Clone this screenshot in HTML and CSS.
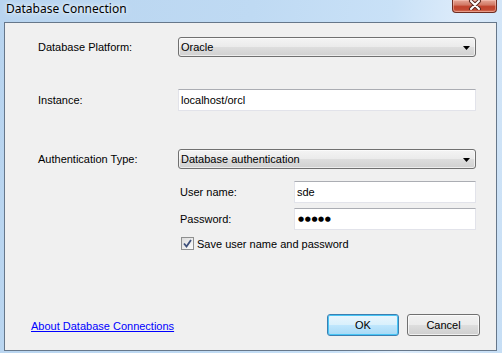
FILE: index.html
```html
<!DOCTYPE html>
<html>
<head>
<meta charset="utf-8">
<link rel="stylesheet" href="styles.css">
</head>
<body>
<div class="window">
  <div class="titlebar">
    <span class="title">Database Connection</span>
    <div class="close">
      <svg width="18" height="10" viewBox="0 0 18 10">
        <path d="M5 1 L13 9 M13 1 L5 9" stroke="#5a2a22" stroke-width="4" stroke-linecap="round"/>
        <path d="M5 1 L13 9 M13 1 L5 9" stroke="#ffffff" stroke-width="2" stroke-linecap="round"/>
      </svg>
    </div>
  </div>
  <div class="panel">
    <div class="row row-platform">
      <div class="label">Database Platform:</div>
      <div class="combo"><span>Oracle</span><svg class="arrow" width="7" height="4" viewBox="0 0 7 4"><path d="M0 0 H7 L3.5 4 Z" fill="#000"/></svg></div>
    </div>
    <div class="row row-instance">
      <div class="label">Instance:</div>
      <div class="field">localhost/orcl</div>
    </div>
    <div class="row row-auth">
      <div class="label">Authentication Type:</div>
      <div class="combo"><span>Database authentication</span><svg class="arrow" width="7" height="4" viewBox="0 0 7 4"><path d="M0 0 H7 L3.5 4 Z" fill="#000"/></svg></div>
    </div>
    <div class="sub">
      <div class="subrow">
        <div class="sublabel">User name:</div>
        <div class="field small">sde</div>
      </div>
      <div class="subrow pw">
        <div class="sublabel">Password:</div>
        <div class="field small dots">●●●●●</div>
      </div>
      <div class="check">
        <span class="box"><svg width="11" height="11" viewBox="0 0 11 11"><path d="M2 5.5 L4.5 8.5 L9 2" fill="none" stroke="#3d4f7a" stroke-width="1.8"/></svg></span>
        <span>Save user name and password</span>
      </div>
    </div>
    <div class="footer">
      <a class="link" href="#">About Database Connections</a>
      <div class="buttons">
        <div class="btn default">OK</div>
        <div class="btn">Cancel</div>
      </div>
    </div>
  </div>
</div>
</body>
</html>
```

FILE: styles.css
```css
html, body {
  margin: 0;
  padding: 0;
}
body {
  width: 502px;
  height: 353px;
  overflow: hidden;
  background: linear-gradient(100deg, #b8d4ef 0%, #bfdaf3 45%, #c9e1f7 70%, #dcebfa 82%, #c6def5 100%);
  font-family: "Liberation Sans", Arial, sans-serif;
  font-size: 11px;
  color: #000;
}
.window {
  display: flex;
  flex-direction: column;
  height: 353px;
}
.titlebar {
  height: 22px;
  display: flex;
  align-items: flex-start;
  padding-left: 6px;
  padding-right: 5px;
}
.title {
  font-family: "Noto Sans", "Open Sans", sans-serif;
  font-size: 12px;
  line-height: 16px;
  margin-top: 1px;
  text-shadow: 0 0 6px #eaf4fe, 0 0 3px #f2f8ff;
}
.close {
  margin-left: auto;
  margin-right: 0;
  width: 45px;
  height: 13px;
  box-sizing: border-box;
  border: 1px solid #6e2d22;
  border-top: none;
  border-radius: 0 0 4px 4px;
  background: linear-gradient(#e6a797 0%, #d27a66 40%, #c0432c 55%, #c34a33 80%, #d97a60 100%);
  box-shadow: inset 0 0 0 1px rgba(255,210,200,0.45);
  display: flex;
  justify-content: center;
  align-items: flex-start;
}
.close svg { display: block; margin-top: 0px; }
.panel {
  flex: 1;
  margin: 0 5px 2px 4px;
  border: 1px solid #66778a;
  background: #f0f0f0;
  display: flex;
  flex-direction: column;
  padding: 14px 20px 14px 0;
}
.row {
  display: flex;
  align-items: center;
}
.label {
  width: 140px;
  padding-left: 33px;
  flex: none;
}
.row-instance { margin-top: 32px; }
.row-auth { margin-top: 38px; }
.combo {
  width: 298px;
  height: 20px;
  box-sizing: border-box;
  border: 1px solid #707070;
  border-radius: 3px;
  background: linear-gradient(#f4f4f4 0%, #ebebeb 48%, #dddddd 52%, #d0d0d0 100%);
  box-shadow: inset 0 0 0 1px rgba(255,255,255,0.6);
  display: flex;
  align-items: center;
  padding: 0 5px 0 2px;
}
.combo span { flex: 1; }
.arrow { display: block; margin-top: 1px; }
.field {
  width: 298px;
  height: 22px;
  box-sizing: border-box;
  border: 1px solid #e2e3ea;
  border-top-color: #abadb3;
  border-left-color: #e2e3ea;
  background: #fff;
  display: flex;
  align-items: center;
  padding-left: 2px;
}
.sub {
  margin-left: 175px;
  margin-top: 12px;
  display: flex;
  flex-direction: column;
}
.subrow {
  display: flex;
  align-items: center;
}
.subrow.pw { margin-top: 5px; }
.sublabel {
  width: 114px;
  flex: none;
}
.field.small {
  width: 182px;
}
.dots {
  font-family: "DejaVu Sans", sans-serif;
  font-size: 7px;
  letter-spacing: 0.6px;
  padding-left: 3px;
}
.check {
  display: flex;
  align-items: center;
  margin-top: 7px;
  margin-left: 1px;
}
.box {
  width: 13px;
  height: 13px;
  box-sizing: border-box;
  border: 1px solid #8e8f8f;
  background: linear-gradient(135deg, #dcdcdc, #fbfbfb);
  display: flex;
  align-items: center;
  justify-content: center;
  margin-right: 3px;
}
.box svg { display: block; }
.footer {
  margin-top: auto;
  display: flex;
  align-items: center;
  padding-left: 26px;
}
.link {
  color: #0000ff;
  text-decoration: underline;
  margin-top: 1px;
}
.buttons {
  margin-left: auto;
  display: flex;
  gap: 8px;
  margin-right: -4px;
}
.btn {
  width: 73px;
  height: 22px;
  box-sizing: border-box;
  border: 1px solid #707070;
  border-radius: 3px;
  background: linear-gradient(#f2f2f2 0%, #ebebeb 48%, #dddddd 52%, #cfcfcf 100%);
  box-shadow: inset 0 0 0 1px rgba(255,255,255,0.7);
  display: flex;
  align-items: center;
  justify-content: center;
}
.btn.default {
  width: 72px;
  border-color: #3c7fb1;
  background: linear-gradient(#eaf6fd 0%, #d9f0fc 48%, #bee6fd 52%, #a7d9f5 100%);
  box-shadow: inset 0 0 0 1px #48c5f5;
}
```
